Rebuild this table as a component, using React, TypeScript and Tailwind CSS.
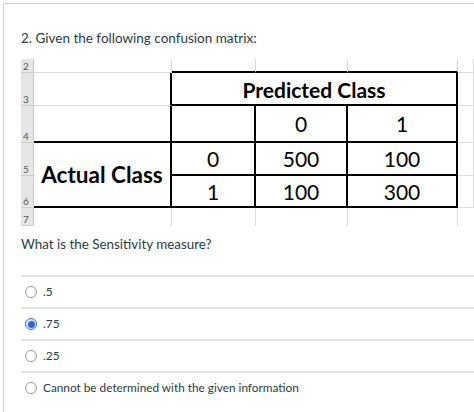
const grid = "border-r border-b border-[#dcdcdc]";

const RowHead = ({ n }: { n: string }) => (
  <div className="flex items-end border-b border-r border-[#cdcdcd] bg-[#e6e6e6] pl-[2px] text-[10px] leading-[12px] text-[#555]">
    {n}
  </div>
);

const Cell = ({
  children,
  className = "",
}: {
  children?: React.ReactNode;
  className?: string;
}) => (
  <div
    className={`flex items-center justify-center text-[21px] leading-none text-black ${className}`}
  >
    {children}
  </div>
);

const Radio = ({ checked }: { checked?: boolean }) =>
  checked ? (
    <span className="flex h-[12px] w-[12px] items-center justify-center rounded-full border border-[#3a6fd0] bg-[#dbe7fb]">
      <span className="h-[7px] w-[7px] rounded-full bg-[#2f66cc]" />
    </span>
  ) : (
    <span className="h-[12px] w-[12px] rounded-full border border-[#9a9a9a] bg-white" />
  );

const options = [
  { label: ".5" },
  { label: ".75", checked: true },
  { label: ".25" },
  { label: "Cannot be determined with the given information" },
];

export default function App() {
  return (
    <div className="h-[412px] w-[474px] overflow-hidden bg-white font-['Lato',sans-serif] text-[#2d3b45]">
      <div className="ml-[3px] mt-[3px] h-full border-l border-t border-[#cfcfcf] pl-[17px] pt-[24px]">
        <p className="text-[13.5px] leading-[20px]">
          2. Given the following confusion matrix:
        </p>

        <div className="mt-[11px] grid grid-cols-[13px_138px_84px_92px_110px_1fr] grid-rows-[14px_33px_37px_33px_32px_18px]">
          {/* row 2 */}
          <RowHead n="2" />
          <div className={grid} />
          <div className="border-b-2 border-r border-b-black border-r-[#dcdcdc]" />
          <div className="border-b-2 border-r border-b-black border-r-[#dcdcdc]" />
          <div className="border-b-2 border-r border-b-black border-r-[#dcdcdc]" />
          <div className={grid} />

          {/* row 3 */}
          <RowHead n="3" />
          <div className="border-b border-r-2 border-b-[#dcdcdc] border-r-black" />
          <Cell className="col-span-3 border-b-2 border-r-2 border-black pt-[2px] text-[21.5px] font-bold">
            Predicted Class
          </Cell>
          <div className={grid} />

          {/* row 4 */}
          <RowHead n="4" />
          <div className="border-b-2 border-r-2 border-black" />
          <Cell className="border-b-2 border-r-2 border-black" />
          <Cell className="border-b-2 border-r-2 border-black">0</Cell>
          <Cell className="border-b-2 border-r-2 border-black">1</Cell>
          <div className={grid} />

          {/* rows 5-6 */}
          <RowHead n="5" />
          <Cell className="row-span-2 border-b-2 border-r-2 border-black pt-[1px] text-[22.5px] font-bold">
            Actual Class
          </Cell>
          <Cell className="border-b-2 border-r-2 border-black">0</Cell>
          <Cell className="border-b-2 border-r-2 border-black">500</Cell>
          <Cell className="border-b-2 border-r-2 border-black">100</Cell>
          <div className={grid} />

          <RowHead n="6" />
          <Cell className="border-b-2 border-r-2 border-black">1</Cell>
          <Cell className="border-b-2 border-r-2 border-black">100</Cell>
          <Cell className="border-b-2 border-r-2 border-black">300</Cell>
          <div className={grid} />

          {/* row 7 */}
          <RowHead n="7" />
          <div className="border-r border-[#dcdcdc]" />
          <div className="border-r border-[#dcdcdc]" />
          <div className="border-r border-[#dcdcdc]" />
          <div className="border-r border-[#dcdcdc]" />
          <div />
        </div>

        <p className="mt-[9px] text-[13.4px] leading-[18px]">
          What is the Sensitivity measure?
        </p>

        <div className="mt-[22px]">
          {options.map((o) => (
            <div
              key={o.label}
              className="flex h-[32px] items-center gap-[6px] border-t-2 border-[#e2e4e6] pl-[4px] text-[11.8px]"
            >
              <Radio checked={o.checked} />
              <span>{o.label}</span>
            </div>
          ))}
        </div>
      </div>
    </div>
  );
}
